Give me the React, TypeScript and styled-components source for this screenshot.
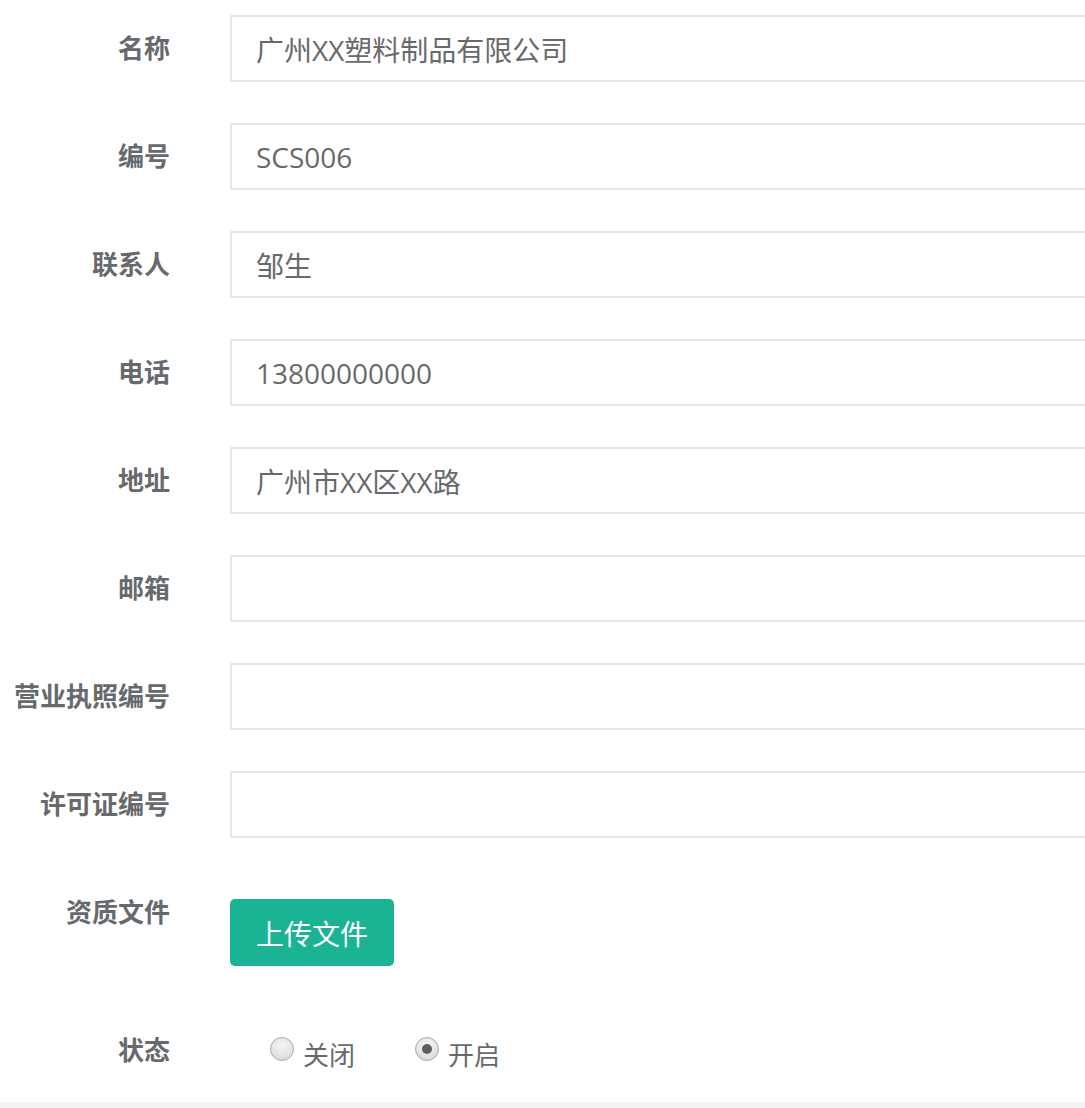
import React from "react";
import styled, { createGlobalStyle } from "styled-components";

const Global = createGlobalStyle`
  html, body { margin: 0; padding: 0; background: #fff; overflow: hidden; }
  body { font-family: "Open Sans", "Noto Sans CJK SC", sans-serif; color: #676a6c; }
`;

const Page = styled.div`
  width: 1085px;
  height: 1108px;
  display: flex;
  flex-direction: column;
  overflow: hidden;
`;

const Form = styled.form`
  flex: 1;
  padding-top: 15px;
  display: flex;
  flex-direction: column;
  gap: 41px;
`;

const Row = styled.div<{ $mt?: number }>`
  display: grid;
  grid-template-columns: 170px 900px;
  column-gap: 60px;
  align-items: start;
  margin-top: ${(p) => p.$mt ?? 0}px;
`;

const Label = styled.label`
  text-align: right;
  font-family: "Noto Sans CJK SC", sans-serif;
  font-weight: 700;
  font-size: 26px;
  line-height: 30px;
  padding-top: 17px;
  color: #676a6c;
  white-space: nowrap;
`;

const Input = styled.input`
  box-sizing: border-box;
  width: 100%;
  height: 67px;
  border: 2px solid #e5e6e7;
  border-radius: 1px;
  padding: 0 24px;
  font-family: "Open Sans", "Noto Sans CJK SC", sans-serif;
  font-size: 28px;
  color: #676a6c;
  background: #fff;
  outline: none;
`;

const UploadButton = styled.button`
  justify-self: start;
  margin-top: 20px;
  width: 164px;
  height: 67px;
  border: none;
  border-radius: 5px;
  background: #1ab394;
  color: #fff;
  font-family: "Noto Sans CJK SC", sans-serif;
  font-size: 28px;
  cursor: pointer;
`;

const RadioGroup = styled.div`
  display: flex;
  gap: 60px;
  padding-left: 40px;
  padding-top: 20px;
`;

const RadioItem = styled.label`
  display: flex;
  align-items: flex-start;
  gap: 9px;
  font-family: "Noto Sans CJK SC", sans-serif;
  font-size: 26px;
  line-height: 34px;
  color: #676a6c;
`;

const RadioDot = styled.span<{ $checked?: boolean }>`
  box-sizing: border-box;
  width: 24px;
  height: 24px;
  border-radius: 50%;
  border: 1px solid #a9a9a9;
  background: radial-gradient(circle at 50% 35%, #f6f6f6 0%, #e2e2e2 60%, #d2d2d2 100%);
  display: flex;
  align-items: center;
  justify-content: center;
  flex-shrink: 0;
  &::after {
    content: "";
    width: 10px;
    height: 10px;
    border-radius: 50%;
    background: #5e5e5e;
    display: ${(p) => (p.$checked ? "block" : "none")};
  }
`;

const BottomBar = styled.div`
  height: 6px;
  background: #f3f3f4;
`;

const fields: [string, string][] = [
  ["名称", "广州XX塑料制品有限公司"],
  ["编号", "SCS006"],
  ["联系人", "邹生"],
  ["电话", "13800000000"],
  ["地址", "广州市XX区XX路"],
  ["邮箱", ""],
  ["营业执照编号", ""],
  ["许可证编号", ""],
];

export default function App() {
  return (
    <Page>
      <Global />
      <Form onSubmit={(e) => e.preventDefault()}>
        {fields.map(([label, value]) => (
          <Row key={label}>
            <Label>{label}</Label>
            <Input defaultValue={value} />
          </Row>
        ))}
        <Row>
          <Label>资质文件</Label>
          <UploadButton type="button">上传文件</UploadButton>
        </Row>
        <Row $mt={10}>
          <Label>状态</Label>
          <RadioGroup>
            <RadioItem>
              <RadioDot />
              关闭
            </RadioItem>
            <RadioItem>
              <RadioDot $checked />
              开启
            </RadioItem>
          </RadioGroup>
        </Row>
      </Form>
      <BottomBar />
    </Page>
  );
}
